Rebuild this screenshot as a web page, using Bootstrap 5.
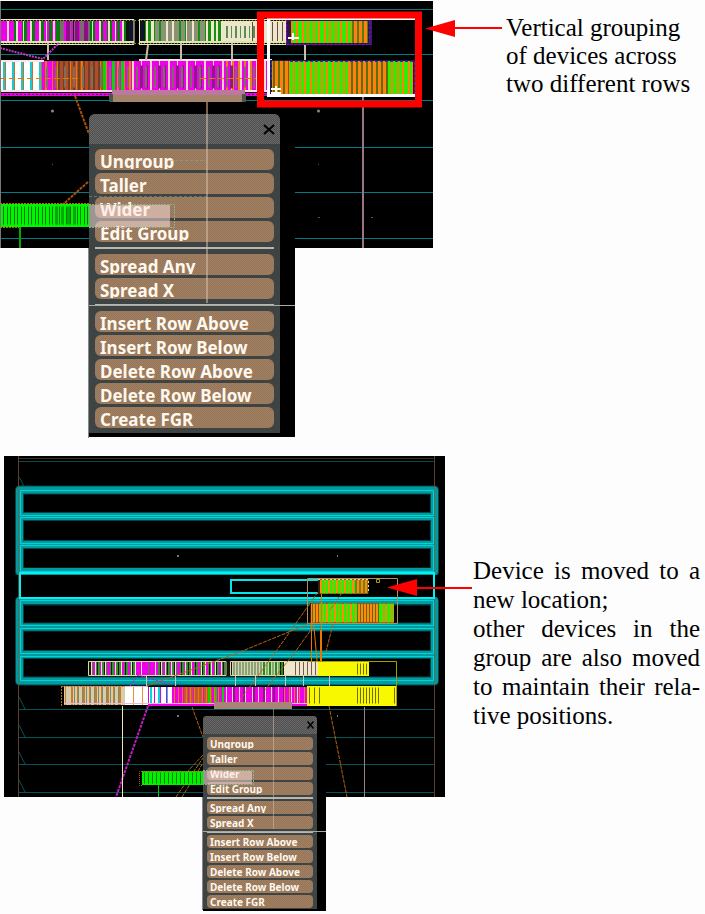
<!DOCTYPE html>
<html lang="en">
<head>
<meta charset="utf-8">
<meta name="viewport" content="width=device-width, initial-scale=1">
<title>Vertical grouping of devices</title>
<link href="https://cdn.jsdelivr.net/npm/bootstrap@5.3.0/dist/css/bootstrap.min.css" rel="stylesheet">
<style>
body { background: #fdfdfd; color: #000; }
.figures { gap: 18px; }
.stage { display: grid; justify-items: start; align-items: start; }
.stage > * { grid-area: 1 / 1; }
.stage svg { display: block; overflow: visible; }
.over { pointer-events: none; z-index: 2; }
.caption-text { font: 25px/28px "Liberation Serif", "Times New Roman", serif; }
.caption-one { padding: 14px 5px 0 73px; }
.caption-two { padding: 100px 5px 0 28px; line-height: 29px; text-align: justify; hyphens: manual; }
.menu-back { background: #000; z-index: 1; }
.tool-menu { background: #3d4443; font-family: "Noto Sans", sans-serif; font-weight: 700; }
.tool-head { background: repeating-conic-gradient(#686868 0 25%, #505050 0 50%) 0 0 / 2px 2px; }
.tool-close { background: none; border: 0; padding: 0; line-height: 0; }
.tool-item { display: block; width: 100%; border: 0; padding: 0 5px; background: repeating-conic-gradient(#a17f60 0 25%, #94765a 0 50%) 0 0 / 2px 2px; color: #fff8ee; text-align: left; font-weight: 700; }
.tool-item span { display: block; white-space: nowrap; }
.tool-item .short { overflow: hidden; }
.tool-menu hr { margin: 0; border: 0; background: #b9b5af; opacity: 1; }
.menu-large { margin: 114px 0 0 89px; padding: 0 15px 4px 0; }
.menu-large .tool-menu, .menu-large .tool-head { border-radius: 6px 6px 0 0; }
.menu-large .tool-menu { width: 191px; }
.menu-large .tool-head { height: 30px; padding: 0 5px; }
.menu-large .tool-list { padding: 5px 6px 5px; gap: 3px; }
.menu-large .tool-item { height: 21px; border-radius: 6px; font-size: 17px; }
.menu-large .tool-item span { height: 18px; line-height: 21px; }
.menu-large hr { height: 2px; margin: 2px 0; }
.menu-small { margin: 260px 0 0 199px; padding: 0 9px 2px 0; }
.menu-small .tool-menu, .menu-small .tool-head { border-radius: 4px 4px 0 0; }
.menu-small .tool-menu { width: 114px; }
.menu-small .tool-head { height: 18px; padding: 0 3px; }
.menu-small .tool-list { padding: 3px 4px 1px; gap: 2px; }
.menu-small .tool-item { height: 13px; border-radius: 4px; padding: 0 3px; font-size: 10px; }
.menu-small .tool-item span { height: 11px; line-height: 13px; padding-left: 3px; }
.menu-small .tool-item { padding: 0; }
.menu-small hr { height: 2px; }
</style>
<script src="https://cdn.jsdelivr.net/npm/bootstrap@5.3.0/dist/js/bootstrap.bundle.min.js"></script>
</head>
<body>
<main class="figures d-flex flex-column">
<section class="d-flex align-items-start">
<div class="stage flex-shrink-0">
<svg width="433" height="248" viewBox="0 0 433 248" fill="none" aria-hidden="true">
<path fill="#000" d="M0 1H433V248H0z"/>
<path stroke="#007d82" d="M0 9.500H433M0 54.500H433M0 100.500H433M0 147.500H433M0 192.500H433M0 238.500H433"/>
<!-- upper device row -->
<path fill="#101408" d="M0 19H134V45H0zM139 19H290V45H139z"/>
<g stroke-width="21">
<path stroke="#067a0a" d="M0 31.500H60M88 31.500H126"/>
<path stroke="#ee00e8" d="M0 31.500H14"/>
<path stroke="#ee00e8" stroke-dasharray="4 5 5 3" d="M18 31.500H126"/>
<path stroke="#eadfc4" stroke-dasharray="2 7 2 5 1 6" d="M7 31.500H126"/>
<path stroke="#7b6a70" stroke-dasharray="4 2 5 3" d="M60 31.500H90"/>
<path stroke="#8d0c8a" stroke-dasharray="4 5" d="M66 31.500H90"/>
<path stroke="#101430" d="M129 31.500H133M141 31.500H144"/>
<path stroke="#159015" d="M145 31.500H224"/>
<path stroke="#f0e8c8" stroke-dasharray="2 3 3 2" d="M146 31.500H224"/>
<path stroke="#8b9178" stroke-dasharray="4 2 5 2" d="M155 31.500H206"/>
<path stroke="#eee6cc" d="M222 31.500H288"/>
</g>
<path stroke="#579050" stroke-width="12" stroke-dasharray="2 3 1 3" d="M226 32H257"/>
<path stroke="#6c4a40" stroke-width="20" stroke-dasharray="1 4" d="M252 32H288"/>
<path stroke="#f0e8c4" d="M0 19.500H134V44.500H0M139.500 19.500H290M139.500 44.500H290M139.500 19V45"/>
<path stroke="#dfe3b5" stroke-width="2" d="M0 42H134M139 42H287"/>
<path stroke="#7aa000" stroke-dasharray="1 2" d="M0 20.500H290M0 43.500H290"/>
<!-- lower device row -->
<g stroke-width="31">
<path stroke="#fff" d="M0 76.500H42"/>
<path stroke="#18c9d0" stroke-dasharray="2 7" d="M3 76.500H42"/>
<path stroke="#c0712c" stroke-dasharray="1 8" d="M5 76.500H42"/>
<path stroke="#f000ea" d="M42 76.500H268"/>
<path stroke="#b24c2c" d="M56 76.500H104"/>
<path stroke="#ec7a00" stroke-dasharray="2 5 1 4" d="M45 76.500H134"/>
<path stroke="#704020" stroke-dasharray="2 3" d="M58 76.500H104"/>
<path stroke="#00dc00" stroke-dasharray="3 6" d="M103 76.500H128"/>
<path stroke="#e8d8c0" stroke-dasharray="2 7 1 8" d="M132 76.500H236"/>
<path stroke="#e88218" stroke-dasharray="2 4" d="M226 76.500H268"/>
<path stroke="#f3d8e0" stroke-dasharray="2 6" d="M240 76.500H268"/>
</g>
<path stroke="#8b1b87" stroke-width="23" stroke-dasharray="3 3 2 10" d="M140 77H236"/>
<path stroke="#7a7060" stroke-width="21" stroke-dasharray="2 7" d="M46 77H256"/>
<path stroke="#e97800" stroke-dasharray="6 3" d="M0 78.500H78M200 78.500H256"/>
<path stroke="#f6e6ea" stroke-width="2" d="M0 61H44M0 91H268M139 60H272"/>
<path stroke="#f000ea" stroke-width="3" d="M0 94.500H268"/>
<path stroke="#552050" stroke-dasharray="2 2" d="M0 94.500H268"/>
<path fill="#a58569" d="M112 94H245V102H112z"/>
<path fill="#bd78a0" d="M112 90H245V95H112z"/>
<path fill="#4d554e" d="M109 94h4v8h-4zM242 94h4v8h-4z"/>
<!-- grouped devices -->
<path fill="#281a40" d="M286 20H372V45H286zM269 60H415V96H269z"/>
<path stroke="#ff8010" stroke-width="22" d="M291 32H367"/>
<path stroke="#2cee00" stroke-width="22" stroke-dasharray="3 2 4 2" d="M293 32H351"/>
<path stroke="#5c7a08" stroke-width="22" stroke-dasharray="2 3" d="M352 32H368"/>
<path stroke="#9000d8" d="M286.500 20V44.500H371V20" stroke-dasharray="3 1"/>
<path stroke="#ff8010" stroke-width="33" d="M272 77.500H413"/>
<path stroke="#2cee00" stroke-width="33" stroke-dasharray="3 2 4 2" d="M290 77.500H350M388 77.500H412"/>
<path stroke="#5c7000" stroke-width="33" stroke-dasharray="2 3" d="M273 77.500H289M351 77.500H389"/>
<path stroke="#2530c8" stroke-dasharray="3 2" d="M290 61.500H414M369.500 21V43M414.500 62V95M271.500 62V80"/>
<path stroke="#c9bda8" stroke-width="2" d="M48 43V60M148 45L146 60M181 43V60M232 43V60M305 45V60"/>
<path stroke="#c03ac6" stroke-width="2" stroke-dasharray="2 1" d="M0 48L43 59L59 43"/>
<path stroke="#a85210" stroke-width="2" stroke-dasharray="3 1" d="M75 96L89 134M50 216L88 182"/>
<path stroke="#80604c" stroke-width="2" d="M207 102V114"/>
<path stroke="#987488" stroke-width="2" d="M363 96V248"/>
<path stroke="#fff" stroke-width="3" d="M268.500 18V95.500H416"/>
<path stroke="#fff" stroke-width="2" d="M268 19H416M288 38H299M293 33V40M271 89H281M271 93H281M276 86V94"/>
<rect x="260.500" y="15" width="158" height="89" stroke="red" stroke-width="7"/>
<!-- green device -->
<path fill="#00f500" d="M0 204H89V227H0z"/>
<path stroke="#007800" stroke-width="18" stroke-dasharray="1 3 1 2" d="M3 215.500H88"/>
<path stroke="#08a808" stroke-width="18" stroke-dasharray="3 3" d="M55 215.500H76"/>
<path stroke="#c66a00" stroke-dasharray="2 1" d="M0 203.500H89M0 227.500H20"/>
<path stroke="#00a800" stroke-width="2" d="M20 227V248"/>
<path stroke="#777" d="M.5 1V248"/>
<circle cx="52.500" cy="111" r="1.500" fill="#888"/><circle cx="318.500" cy="111" r="1.500" fill="#888"/>
<path fill="#555" d="M52 164h1v1h-1zM318 164h1v1h-1zM318 217h2v1h-2zM371 217h2v1h-2z"/>
</svg>
<div class="menu-back menu-large">
<div class="tool-menu">
<div class="tool-head d-flex align-items-center justify-content-end"><button class="tool-close" type="button" aria-label="Close"><svg width="12" height="11" viewBox="0 0 12 11"><path d="M1 1L11 10M11 1L1 10" stroke="#000" stroke-width="2"/></svg></button></div>
<div class="tool-list d-flex flex-column">
<button class="tool-item" type="button"><span class="short">Ungroup</span></button>
<button class="tool-item" type="button"><span>Taller</span></button>
<button class="tool-item" type="button"><span>Wider</span></button>
<button class="tool-item" type="button"><span class="short">Edit Group</span></button>
<hr>
<button class="tool-item" type="button"><span class="short">Spread Any</span></button>
<button class="tool-item" type="button"><span class="short">Spread X</span></button>
<hr>
<button class="tool-item" type="button"><span>Insert Row Above</span></button>
<button class="tool-item" type="button"><span>Insert Row Below</span></button>
<button class="tool-item" type="button"><span>Delete Row Above</span></button>
<button class="tool-item" type="button"><span>Delete Row Below</span></button>
<button class="tool-item" type="button"><span>Create FGR</span></button>
</div>
</div>
</div>
<svg class="over" width="433" height="438" viewBox="0 0 433 438" fill="none" aria-hidden="true">
<path fill="#ffe4e4" fill-opacity=".5" d="M89 205H170V227H89z"/>
<path stroke="#8fb08c" stroke-dasharray="2 1" d="M89 204.500H174.500V227.500H89"/>
<path stroke="#d8c4b0" stroke-opacity=".5" stroke-width="2" d="M207 114V303"/>
<path stroke="#a9a9a2" d="M88 305.500H295"/>
<path stroke="#7fb09a" stroke-opacity=".5" stroke-dasharray="3 2" d="M170 160.500H206M89 196.500H206"/>
<path stroke="#888" d="M88.500 248V438"/>
<path stroke="red" stroke-width="2" d="M453 28H502"/><path fill="red" d="M425 28.500L455 20V37z"/>
</svg>
</div>
<p class="caption-text caption-one flex-fill mb-0">Vertical grouping<br>of devices across<br>two different rows</p>
</section>
<section class="d-flex align-items-start ps-1">
<div class="stage flex-shrink-0">
<svg width="441" height="342" viewBox="4 456 441 342" fill="none" aria-hidden="true">
<path fill="#000" d="M4 456H445V797H4z"/>
<path stroke="#3a2c18" d="M19 458.500H434"/><path stroke="#0b4a4c" d="M19 461.500H434"/>
<path stroke="#005659" d="M19 709.500H434M19 737.500H434M19 764.500H434M19 792.500H434M19 477L24 486M19 588L24 597M19 697L25 709M19 725L25 737M19 752L25 764M19 780L25 792"/>
<!-- highlighted rows -->
<g stroke="#00484b" stroke-width="9" stroke-linejoin="round"><path d="M19.500 490H434.500V572H19.500zM19.500 601H434.500V681H19.500zM19 516.500H434M19 544.500H434M19 627H434M19 654.500H434"/></g>
<g stroke="#009b9f" stroke-width="7" stroke-linejoin="round"><path d="M19.500 490H434.500V571.500H19.500zM19.500 600.500H434.500V681H19.500zM19 516.500H434M19 544.500H434M19 627H434M19 654.500H434"/></g>
<path stroke="#00d4d6" d="M20.500 490.500H433.500V515.500H20.500zM20.500 517.500H433.500V543.500H20.500zM20.500 545.500H433.500V571.500H20.500zM20.500 600.500H433.500V625.500H20.500zM20.500 628.500H433.500V653.500H20.500zM20.500 656.500H433.500V680.500H20.500z"/>
<path fill="#000" d="M14 575H440V597H14z"/>
<path stroke="#86593c" stroke-opacity=".7" d="M18.500 456V797M434.500 456V797"/>
<path stroke="#00f2f4" stroke-width="2" d="M20 573H434V598H20z"/>
<path stroke="#00e8ec" stroke-width="2" d="M320 580H231V593H320"/>
<path stroke="#b78c62" d="M307.500 578.500H397.500V623.500H307.500z"/>
<!-- moved pair -->
<path fill="#302010" d="M318 579H369V594H318zM310 603H394V623H310z"/>
<path stroke="#ff8810" stroke-width="14" d="M320 586.500H368"/>
<path stroke="#2cee00" stroke-width="14" stroke-dasharray="3 1 2 2" d="M322 586.500H355"/>
<path stroke="#76800c" stroke-width="14" stroke-dasharray="2 2" d="M355 586.500H368"/>
<path stroke="#e8d8a8" stroke-dasharray="2 2" d="M318 579.500H368.500V593"/>
<path stroke="#ff8810" stroke-width="19" d="M311 613H394"/>
<path stroke="#2cee00" stroke-width="19" stroke-dasharray="3 1 2 2" d="M320 613H357M379 613H393"/>
<path stroke="#686800" stroke-width="19" stroke-dasharray="1 2" d="M312 613H320M357 613H380"/>
<path stroke="#a8a000" d="M376.500 579.500h3v3h-3z"/>
<!-- original group row, upper -->
<path fill="#151508" d="M88 661H318V676H88z"/>
<g stroke-width="13">
<path stroke="#3d8c38" d="M92 668.500H225"/>
<path stroke="#f000e8" stroke-dasharray="3 4 2 5" d="M93 668.500H224"/>
<path stroke="#efe6cc" stroke-dasharray="1 3 1 5" d="M91 668.500H225"/>
<path stroke="#151508" stroke-dasharray="1 6" d="M90 668.500H225"/>
<path stroke="#f000e8" stroke-dasharray="5 2" d="M136 668.500H156"/>
<path stroke="#8aa477" d="M232 668.500H280"/>
<path stroke="#d9d4b4" stroke-dasharray="1 2" d="M232 668.500H280"/>
<path stroke="#159515" stroke-dasharray="2 4" d="M263 668.500H284"/>
<path stroke="#efe6cc" d="M284 668.500H318"/>
<path stroke="#705a52" stroke-dasharray="1 3" d="M295 668.500H318"/>
</g>
<path stroke="#ddd8aa" d="M88.500 661.500H226V675.500H88.500zM230.500 661.500H320V675.500H230.500z"/>
<path fill="#000" d="M369 662H397V676H369z"/>
<path fill="#f8f800" d="M318 662H369V676H318z"/>
<path stroke="#706c00" stroke-width="11" stroke-dasharray="1 2" d="M357 669H368"/>
<!-- original group row, lower -->
<path fill="#000" d="M61 686H397V706H61z"/>
<g stroke-width="18">
<path stroke="#d7cda8" d="M64 696H125"/>
<path stroke="#c87c30" stroke-dasharray="1 5 2 4" d="M65 696H125"/>
<path stroke="#7b8c68" stroke-dasharray="1 3" d="M74 696H120"/>
<path stroke="#fff" d="M125 696H172"/>
<path stroke="#ef9030" stroke-dasharray="1 8" d="M133 696H150"/>
<path stroke="#00d8dc" stroke-dasharray="2 6" d="M150 696H172"/>
<path stroke="#e000da" stroke-dasharray="1 5" d="M148 696H172"/>
<path stroke="#f000e8" d="M172 696H307"/>
<path stroke="#c25830" stroke-dasharray="4 1" d="M184 696H212"/>
<path stroke="#e87e00" stroke-dasharray="1 3" d="M174 696H224"/>
<path stroke="#00d800" stroke-dasharray="2 5" d="M208 696H224"/>
<path stroke="#eddcc8" stroke-dasharray="1 5 1 6" d="M226 696H307"/>
<path stroke="#8a1885" stroke-dasharray="2 8" d="M233 696H290"/>
<path stroke="#e08020" stroke-dasharray="1 4" d="M284 696H307"/>
</g>
<path stroke="#f0b8d8" d="M64 686.500H148M64 703.500H307"/>
<path stroke="#ef00e8" stroke-width="2" d="M148 705H307"/>
<path stroke="#c87010" stroke-dasharray="2 1" d="M61.500 686.500H125M61.500 686V706"/>
<path fill="#f8f800" d="M307 686H397V706H307z"/>
<path stroke="#706c00" stroke-width="16" stroke-dasharray="1 2" d="M357 695.500H381"/>
<path stroke="#706c00" stroke-width="16" stroke-dasharray="1 4" d="M309 695.500H320M394 695.500H396"/>
<path stroke="#a0a000" d="M307.500 661.500H396.500V706"/>
<path fill="#a98475" d="M214 702H292V709H214z"/>
<!-- connections -->
<path stroke="#b86412" stroke-dasharray="4 1" d="M318 592L277 650L240 700M313 622L240 652L147 686M313 627L295 652L265 690M342 593L330 610M333 624L326 652M329 706L347 797M192 707L203 737M176 797L203 758M182 797L203 763M203 755L187 772"/>
<path stroke="#e87600" d="M311.500 622V661M313.500 622L317 661M321.500 594V661M320.500 630V661"/>
<path stroke="#bd20b8" stroke-width="2" stroke-dasharray="3 1" d="M148 706L116 797"/>
<path stroke="#bd20b8" stroke-dasharray="3 1" d="M130 686L138 675L172 685"/>
<path stroke="#cfc6b0" d="M146.500 676V686M175.500 676V686M235.500 676V686M255.500 676V686M285.500 676V686M303.500 676V686M329.500 676V686"/>
<path stroke="#f1e3bb" d="M122.500 706V797"/>
<path stroke="#948090" d="M364.500 707V797"/>
<path fill="#00f000" d="M142 771H203V785H142z"/>
<path stroke="#007c00" stroke-width="11" stroke-dasharray="1 3" d="M144 778H203"/>
<path stroke="#b36000" stroke-dasharray="1 1" d="M142 785.500H139.500V771.500H203"/>
<path stroke="#00c800" d="M158.500 785V797"/>
<path fill="#777" d="M177 715h2v2h-2zM337 715h1v2h-1zM177 555h2v2h-2zM337 555h1v2h-1z"/>
</svg>
<div class="menu-back menu-small">
<div class="tool-menu">
<div class="tool-head d-flex align-items-center justify-content-end"><button class="tool-close" type="button" aria-label="Close"><svg width="7" height="8" viewBox="0 0 7 8"><path d="M.5 .5L6.500 7.500M6.500 .5L.5 7.500" stroke="#000" stroke-width="1.500"/></svg></button></div>
<div class="tool-list d-flex flex-column">
<button class="tool-item" type="button"><span class="short">Ungroup</span></button>
<button class="tool-item" type="button"><span>Taller</span></button>
<button class="tool-item" type="button"><span>Wider</span></button>
<button class="tool-item" type="button"><span class="short">Edit Group</span></button>
<hr>
<button class="tool-item" type="button"><span class="short">Spread Any</span></button>
<button class="tool-item" type="button"><span class="short">Spread X</span></button>
<hr>
<button class="tool-item" type="button"><span>Insert Row Above</span></button>
<button class="tool-item" type="button"><span>Insert Row Below</span></button>
<button class="tool-item" type="button"><span>Delete Row Above</span></button>
<button class="tool-item" type="button"><span>Delete Row Below</span></button>
<button class="tool-item" type="button"><span>Create FGR</span></button>
</div>
</div>
</div>
<svg class="over" width="441" height="454" viewBox="4 456 441 454" fill="none" aria-hidden="true">
<path fill="#ffe4e4" fill-opacity=".5" d="M203 771H252V784H203z"/>
<path stroke="#8fb08c" stroke-dasharray="2 1" d="M203 770.500H253.500V784.500H203"/>
<path stroke="#d8c4b0" stroke-opacity=".5" d="M273.500 709V829"/>
<path stroke="#a9a9a2" d="M202 831.500H326"/>
<path stroke="#888" d="M202.500 797V910"/>
<path stroke="red" stroke-width="2" d="M415 588H472"/><path fill="red" d="M387 587.500L417 579V596z"/>
</svg>
</div>
<p class="caption-text caption-two flex-fill mb-0">Device is moved to a new location;<br>other devices in the group are also moved to maintain their rela&shy;tive positions.</p>
</section>
</main>
</body>
</html>
